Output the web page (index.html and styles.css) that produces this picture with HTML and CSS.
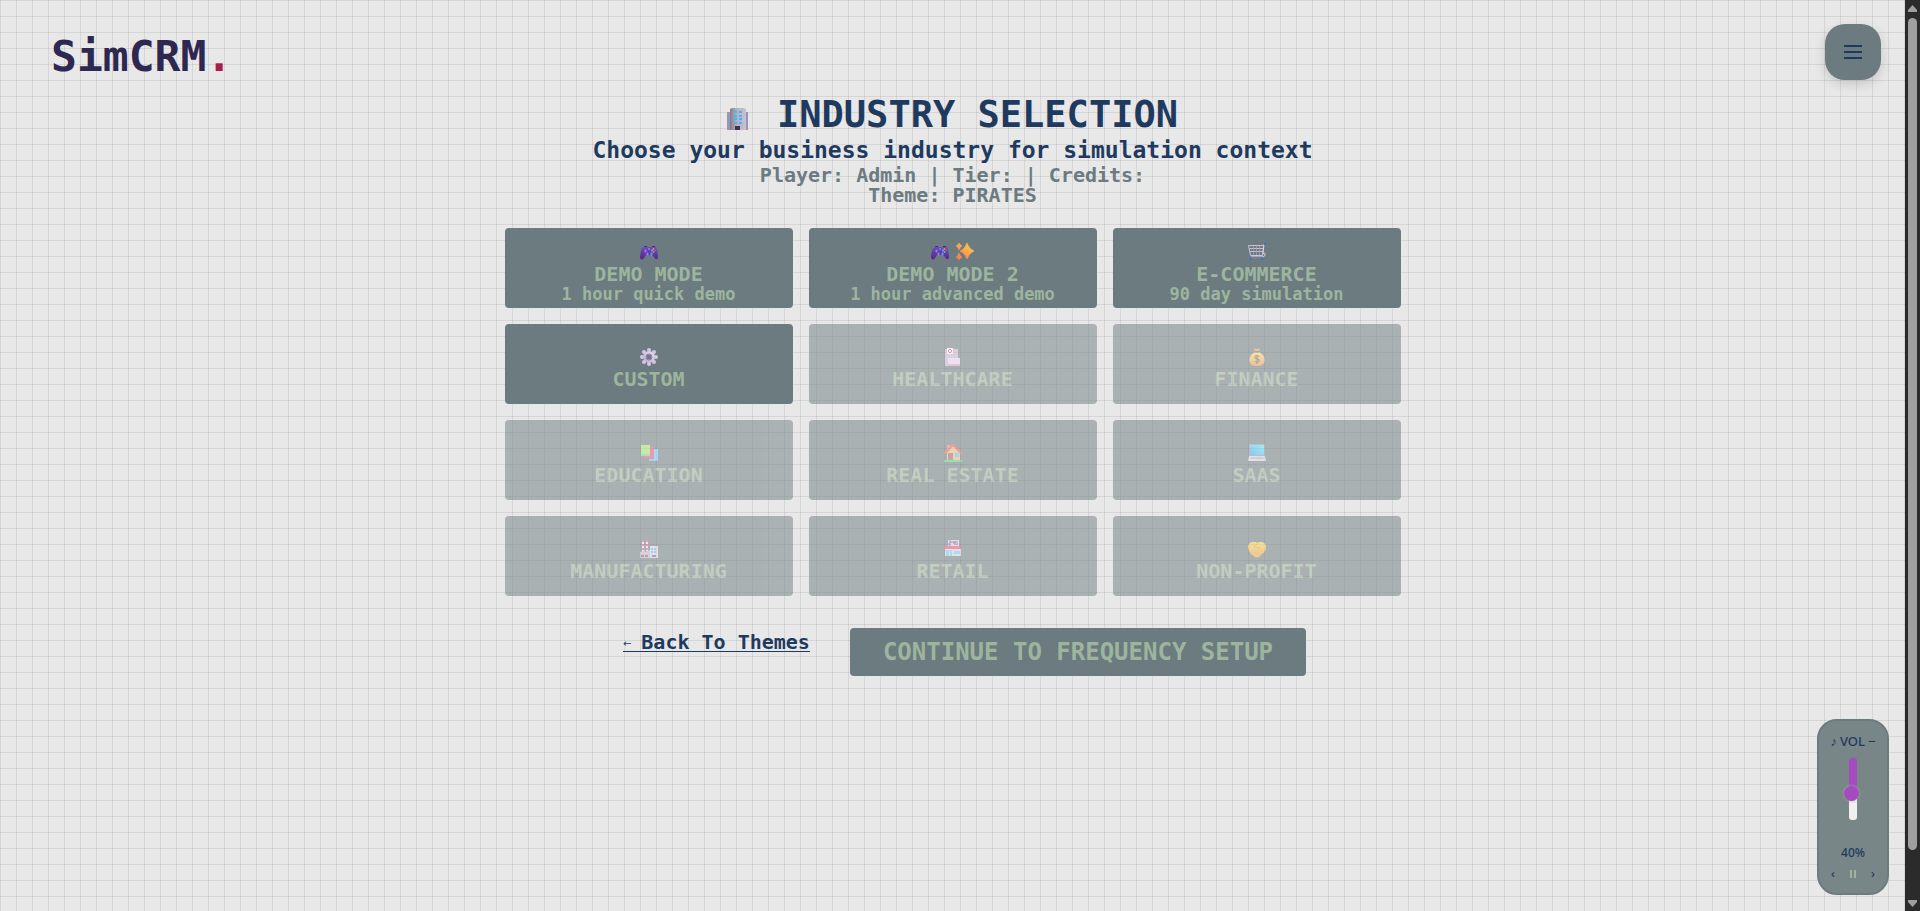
FILE: index.html
```html
<!DOCTYPE html>
<html lang="en">
<head>
<meta charset="utf-8">
<title>SimCRM - Industry Selection</title>
<link rel="stylesheet" href="styles.css">
</head>
<body>
<svg class="sprite" aria-hidden="true">
  <defs>
    <linearGradient id="g-pad" x1="0" y1="0" x2="0" y2="1"><stop offset="0" stop-color="#6a4fc0"/><stop offset="1" stop-color="#55278a"/></linearGradient>
    <linearGradient id="g-star" x1="1" y1="0" x2="0" y2="1"><stop offset="0" stop-color="#ffd84a"/><stop offset="1" stop-color="#ff6f4f"/></linearGradient>
    <linearGradient id="g-gear" x1="1" y1="0" x2="0" y2="1"><stop offset="0" stop-color="#efe6f6"/><stop offset="1" stop-color="#b59fd0"/></linearGradient>
    <linearGradient id="g-bag" x1="0" y1="0" x2="0" y2="1"><stop offset="0" stop-color="#ffe07a"/><stop offset="1" stop-color="#f59a4a"/></linearGradient>
    <linearGradient id="g-hand" x1="0" y1="0" x2="0" y2="1"><stop offset="0" stop-color="#ffd84a"/><stop offset="1" stop-color="#f8a93c"/></linearGradient>
    <linearGradient id="g-wall" x1="0" y1="0" x2="1" y2="0"><stop offset="0" stop-color="#85798a"/><stop offset=".4" stop-color="#b9adbf"/><stop offset="1" stop-color="#cbc0d0"/></linearGradient>
    <linearGradient id="g-screen" x1="1" y1="0" x2="0" y2="1"><stop offset="0" stop-color="#62efff"/><stop offset="1" stop-color="#35a8ee"/></linearGradient>
    <symbol id="i-building" viewBox="0 0 22 22">
      <path d="M0 4h5v18H0zM17 4h4v18h-4z" fill="#a094a6"/><path d="M3 1l2-1h12l2 1v21H3z" fill="url(#g-wall)"/>
      <path d="M7 3h3v2H7zm5 0h3v2h-3zM7 7h3v2H7zm5 0h3v2h-3zM7 10h3v2H7zm5 0h3v2h-3zM7 14h3v2H7zm5 0h3v2h-3zM1 7h1v2H1zm0 4h1v2H1zm0 4h1v2H1zm18-8h1v2h-1zm0 4h1v2h-1zm0 4h1v2h-1z" fill="#35bdf5"/><path d="M8 18h5v4H8z" fill="#43324f"/>
    </symbol>
    <symbol id="i-gamepad" viewBox="0 0 18 18">
      <path d="M4 3h3v2H4zm8 0h3v2h-3z" fill="#352052"/><path d="M3 4q2-1 4 0h4q3-1 5 0c1 3 2 7 2 11q-2 3-4-1l-2-2H6l-2 3q-2 3-4 0c0-4 1-9 3-11z" fill="url(#g-pad)"/>
      <path d="M4 8h3M5.500 6.500v3M6 11h3M7.500 9.500v3M10 11h3M11.500 9.500v3" stroke="#8e83ee"/><circle cx="9" cy="6" r=".7" fill="#d4bcff"/><circle cx="13.500" cy="6" r="1" fill="#ff8a3c"/><circle cx="15" cy="7.500" r="1" fill="#f4366d"/><circle cx="13.500" cy="9" r="1" fill="#35d28a"/><circle cx="12" cy="7.500" r="1" fill="#4db8ff"/>
    </symbol>
    <symbol id="i-sparkles" viewBox="0 0 18 18">
      <path d="M11 0q2 6 7 8-5 2-7 8-2-6-7-8 5-2 7-8zM3 0q1 2 3 3-2 1-3 4-1-3-3-4 2-1 3-3zM3 10q1 3 3 4-2 1-3 3-1-2-3-3 2-1 3-4z" fill="url(#g-star)" stroke="url(#g-star)" stroke-width=".6"/>
    </symbol>
    <symbol id="i-cart" viewBox="0 0 18 18">
      <path d="M.5 2.500h15l-1 10h-12zM1 5.500h14M2 8.500h13" fill="none" stroke="#c9bfd4"/><path d="M5.500 3v9M8.500 3v9M11.500 3v9" stroke="#aaa3b8" stroke-width=".7"/><path d="M17 1h-1l-1 10q3-2 2 1t-3 1H3" fill="none" stroke="#d6cce0"/><path d="M2 15h13" stroke="#8c7fa8"/><path d="M16 0h2v2h-2zM2 15h2v2H2zm11 0h2v2h-2z" fill="#2c78d8"/>
    </symbol>
    <symbol id="i-gear" viewBox="0 0 18 18">
      <path d="M9 3a6 6 0 1 0 0 12A6 6 0 0 0 9 3zm0 3.500a2.500 2.500 0 1 1 0 5 2.500 2.500 0 0 1 0-5z" fill="url(#g-gear)" fill-rule="evenodd"/><g fill="#d5c6e2"><circle cx="9" cy="2" r="2"/><circle cx="14" cy="4" r="2"/><circle cx="16" cy="9" r="2"/><circle cx="14" cy="14" r="2"/><circle cx="9" cy="16" r="2"/><circle cx="4" cy="14" r="2"/><circle cx="2" cy="9" r="2"/><circle cx="4" cy="4" r="2"/></g><circle cx="9" cy="9" r="3" fill="none" stroke="#8f7ba6"/>
    </symbol>
    <symbol id="i-hospital" viewBox="0 0 18 18">
      <path d="M1 1h13v17H1z" fill="#cbb8d6"/><path d="M3 0h6v6H3z" fill="#fff"/><path d="M6 1l2 2-2 2-2-2z" fill="none" stroke="#ee3c72"/><path d="M4 10h12v8H4z" fill="#efdcff"/><path d="M4 16h12v2H4z" fill="#e4a0d6"/>
    </symbol>
    <symbol id="i-money" viewBox="0 0 18 18">
      <path d="M6 1q1-1 3 0 2-1 3 0l-1 2H7z" fill="#f7a54a"/><path d="M7 4h4c8 4 8 14-2 14S-1 8 7 4z" fill="url(#g-bag)"/><path d="M7 4h4" stroke="#8a5436"/><path d="M11.500 8.500q-5-2-4.500.500 0 2 2 2 3 0 2 2.500-2 1.500-4.500 0M9 7v9" fill="none" stroke="#7b563c"/>
    </symbol>
    <symbol id="i-books" viewBox="0 0 18 18">
      <path d="M1 1h9v11H1z" fill="#a8ed65"/><path d="M1 10h9v2H1z" fill="#76d8a0"/><path d="M10 3h4v11H4v-2h6z" fill="#f34b81"/><path d="M14 5h4v12H9v-2h5z" fill="#6fd0ff"/><path d="M9 16h9v1H9z" fill="#89a3f5"/>
    </symbol>
    <symbol id="i-house" viewBox="0 0 18 18">
      <path d="M3 1h3v5H3z" fill="#e48972"/><path d="M3 9l6-7 7 7v8H3z" fill="#f5bc85"/><path d="M0 10L9 1l9 9" fill="none" stroke="#f35f50" stroke-width="2"/><path d="M4 9h5v8H4z" fill="#9b6c58"/><path d="M11 9h4v4h-4z" fill="#57c4ff"/><path d="M0 16h18v2H0z" fill="#48d77c"/>
    </symbol>
    <symbol id="i-laptop" viewBox="0 0 18 18">
      <path d="M1 0h16v12H1z" fill="#8c91bc"/><path d="M2 1h14v10H2z" fill="url(#g-screen)"/><path d="M1 12h16l1 5H0z" fill="#e2d8eb"/><path d="M3 13h12l1 2H2z" fill="#bdb1ce"/>
    </symbol>
    <symbol id="i-factory" viewBox="0 0 18 18">
      <path d="M3 0v11M7 0v11" stroke="#f5eef5" stroke-width="2"/><path d="M3 0v11M7 0v11" stroke="#f5518a" stroke-width="2" stroke-dasharray="2"/><path d="M0 12l5-2v2l5-2v8H0z" fill="#c9bccb"/><path d="M10 6h8v12h-8z" fill="#e1d7ee"/><path d="M11 8h2v2h-2zm3 0h2v2h-2zm-3 3h2v2h-2zm3 0h2v2h-2z" fill="#5bbcf8"/><path d="M1 15h3v2H1zm4 0h3v2H5zm7 0h4v2h-4z" fill="#716577"/>
    </symbol>
    <symbol id="i-store" viewBox="0 0 18 18">
      <path d="M4 0h11v6H4z" fill="#e4d9ed"/><path d="M5 1h2v2H5v2h2M9 1v2h2V1v4M13 1v4" fill="none" stroke="#69527b"/><path d="M1 9h16v7H1z" fill="#e2d6e7"/><path d="M1 6h16l1 3H0z" fill="#f64979"/><path d="M2 10h3v6H2zm4 0h2v6H6zm4 1h6v3h-6z" fill="#65d8fa"/>
    </symbol>
    <symbol id="i-hands" viewBox="0 0 18 18">
      <path d="M0 7q0-4 4-5h4l1 1 2-1h3q4 1 4 5 0 4-4 7l-3 3q-2 1-4 0l-4-3q-3-4-3-7z" fill="url(#g-hand)"/><path d="M10 3L6 7q1 2 4 0l5 5M9 10l3 4M7 11l2 4M3 11l2-2" fill="none" stroke="#e9a03a" stroke-width=".8"/>
    </symbol>
  </defs>
</svg>

<div class="page">
  <header class="topbar">
    <a class="logo" href="#">SimCRM<span class="logo-dot">.</span></a>
    <button class="menu" type="button" aria-label="Menu"><svg width="18" height="14" viewBox="0 0 18 14"><path d="M0 1h18M0 7h18M0 13h18" stroke="currentColor" stroke-width="2"/></svg></button>
  </header>

  <main class="content">
    <h1 class="title"><svg class="title-icon"><use href="#i-building"/></svg>INDUSTRY SELECTION</h1>
    <p class="subtitle">Choose your business industry for simulation context</p>
    <p class="meta">Player: Admin | Tier: | Credits:</p>
    <p class="meta">Theme: PIRATES</p>

    <div class="grid">
      <button class="card" type="button"><span class="icons"><svg class="icon"><use href="#i-gamepad"/></svg></span><span class="name">DEMO MODE</span><span class="note">1 hour quick demo</span></button>
      <button class="card" type="button"><span class="icons"><svg class="icon"><use href="#i-gamepad"/></svg><svg class="icon"><use href="#i-sparkles"/></svg></span><span class="name">DEMO MODE 2</span><span class="note">1 hour advanced demo</span></button>
      <button class="card" type="button"><span class="icons"><svg class="icon"><use href="#i-cart"/></svg></span><span class="name">E-COMMERCE</span><span class="note">90 day simulation</span></button>
      <button class="card" type="button"><span class="icons"><svg class="icon"><use href="#i-gear"/></svg></span><span class="name">CUSTOM</span></button>
      <button class="card" type="button" disabled><span class="icons"><svg class="icon"><use href="#i-hospital"/></svg></span><span class="name">HEALTHCARE</span></button>
      <button class="card" type="button" disabled><span class="icons"><svg class="icon"><use href="#i-money"/></svg></span><span class="name">FINANCE</span></button>
      <button class="card" type="button" disabled><span class="icons"><svg class="icon"><use href="#i-books"/></svg></span><span class="name">EDUCATION</span></button>
      <button class="card" type="button" disabled><span class="icons"><svg class="icon"><use href="#i-house"/></svg></span><span class="name">REAL ESTATE</span></button>
      <button class="card" type="button" disabled><span class="icons"><svg class="icon"><use href="#i-laptop"/></svg></span><span class="name">SAAS</span></button>
      <button class="card" type="button" disabled><span class="icons"><svg class="icon"><use href="#i-factory"/></svg></span><span class="name">MANUFACTURING</span></button>
      <button class="card" type="button" disabled><span class="icons"><svg class="icon"><use href="#i-store"/></svg></span><span class="name">RETAIL</span></button>
      <button class="card" type="button" disabled><span class="icons"><svg class="icon"><use href="#i-hands"/></svg></span><span class="name">NON-PROFIT</span></button>
    </div>

    <div class="actions">
      <a class="back" href="#"><span class="back-arrow">←</span>Back To Themes</a>
      <button class="continue" type="button">CONTINUE TO FREQUENCY SETUP</button>
    </div>
  </main>

  <aside class="volume">
    <div class="volume-head"><span>♪</span><label for="volume">VOL</label><button class="plain" type="button" aria-label="Minimise">−</button></div>
    <input class="slider" id="volume" type="range" min="0" max="100" value="40">
    <output class="volume-value" for="volume">40%</output>
    <div class="player"><button class="plain" type="button" aria-label="Previous">‹</button><button class="plain" type="button" aria-label="Pause"><svg class="pause" width="6" height="8" viewBox="0 0 6 8"><path d="M1 0v8M5 0v8" stroke="currentColor" stroke-width="2"/></svg></button><button class="plain" type="button" aria-label="Next">›</button></div>
  </aside>
</div>

<div class="scrollbar" aria-hidden="true">
  <svg width="9" height="7" viewBox="0 0 9 7"><path d="M4.500 0L9 5v2H0V5z" fill="currentColor"/></svg>
  <div class="track"><div class="thumb"></div></div>
  <svg width="9" height="7" viewBox="0 0 9 7"><path d="M4.500 7L9 2V0H0v2z" fill="currentColor"/></svg>
</div>
</body>
</html>
```
FILE: styles.css
```css
:root {
  --navy: #1e3a5f;
  --slate: #6b7b80;
  --sage: #9db59d;
  --pixel: "DejaVu Sans Mono", "Liberation Mono", monospace;
}

* { box-sizing: border-box; }

body {
  margin: 0;
  min-height: 100vh;
  display: flex;
  font-family: var(--pixel);
  font-weight: 700;
  color: var(--navy);
  background-color: #e8e8e8;
  background-image:
    linear-gradient(rgba(0, 0, 0, .08) 1px, transparent 1px),
    linear-gradient(90deg, rgba(0, 0, 0, .08) 1px, transparent 1px);
  background-size: 16px 16px;
}

button {
  font: inherit;
  color: inherit;
  border: 0;
  padding: 0;
  cursor: pointer;
}

.sprite { position: absolute; width: 0; height: 0; }

.page { flex: 1; min-width: 0; }

.topbar {
  display: flex;
  align-items: center;
  justify-content: space-between;
  padding: 24px 24px 0 51px;
}

.logo {
  color: #2e2850;
  font-size: 43px;
  line-height: 56px;
  padding-top: 4px;
  margin-bottom: -4px;
  text-decoration: none;
}
.logo-dot { color: #ad1a4b; }

.menu {
  display: grid;
  place-items: center;
  width: 56px;
  height: 56px;
  border-radius: 20px;
  background: var(--slate);
  box-shadow: 0 4px 12px rgba(0, 0, 0, .15);
}

.content {
  display: flex;
  flex-direction: column;
  align-items: center;
  padding: 14px 24px 24px;
}

.title {
  display: flex;
  align-items: center;
  gap: 28px;
  margin: 0;
  font-size: 37px;
  line-height: 42px;
}
.title-icon { width: 22px; height: 22px; margin-top: 8px; }

.subtitle {
  margin: 0 0 1px;
  font-size: 23px;
  line-height: 28px;
}

.meta {
  margin: 0;
  font-size: 20px;
  line-height: 20px;
  color: var(--slate);
}

.grid {
  display: grid;
  grid-template-columns: repeat(3, 1fr);
  gap: 16px;
  width: 100%;
  max-width: 896px;
  margin-top: 23px;
}

.card {
  display: flex;
  flex-direction: column;
  align-items: center;
  justify-content: center;
  min-height: 80px;
  padding-top: 8px;
  border-radius: 4px;
  background: var(--slate);
  color: var(--sage);
}
.card:disabled { opacity: .5; cursor: not-allowed; }

.icons { display: flex; align-items: center; gap: 7px; height: 22px; }
.icon { width: 18px; height: 18px; }
.name { font-size: 20px; line-height: 22px; }
.note { font-size: 17px; line-height: 18px; }

.actions {
  display: flex;
  align-items: flex-start;
  gap: 40px;
  margin-top: 32px;
  padding-left: 24px;
}

.back {
  display: flex;
  align-items: center;
  gap: 10px;
  margin-top: 5px;
  font-size: 20px;
  line-height: 18px;
  color: var(--navy);
  text-decoration: none;
  border-bottom: 1px solid var(--navy);
}
.back-arrow { font: 400 10px/14px "DejaVu Sans", sans-serif; padding-top: 4px; }

.continue {
  padding: 0 33px;
  font-size: 24px;
  line-height: 48px;
  border-radius: 4px;
  background: var(--slate);
  color: var(--sage);
}

.volume {
  position: fixed;
  right: 31px;
  bottom: 16px;
  display: flex;
  flex-direction: column;
  align-items: center;
  width: 72px;
  height: 176px;
  padding: 10px 8px;
  border: 2px solid var(--slate);
  border-radius: 20px;
  background: #788687;
  font: 500 12px/20px "Noto Sans", sans-serif;
}
.volume-head { display: flex; gap: 3px; font-size: 13px; }

.plain { background: none; line-height: 16px; }
.pause { display: block; color: var(--sage); }

.slider {
  appearance: none;
  writing-mode: vertical-lr;
  direction: rtl;
  width: 8px;
  height: 62px;
  margin: 7px 0 23px;
  border-radius: 3px;
  background: linear-gradient(#a64ac0 50%, #f0f0ee 50%);
}
.slider::-webkit-slider-thumb {
  appearance: none;
  width: 15px;
  height: 15px;
  margin-left: -3px;
  border-radius: 50%;
  background: #a64ac0;
  box-shadow: 0 0 3px var(--sage);
}

.player {
  display: flex;
  align-items: center;
  justify-content: space-between;
  width: 44px;
  margin-top: 3px;
}

.scrollbar {
  display: flex;
  flex-direction: column;
  align-items: center;
  width: 15px;
  height: 100vh;
  padding: 5px 0 4px;
  background: #2b2b2b;
  color: #9f9f9f;
}
.track { flex: 1; width: 9px; padding: 6px 0; }
.thumb { height: 95%; border-radius: 5px; background: currentColor; }
```
